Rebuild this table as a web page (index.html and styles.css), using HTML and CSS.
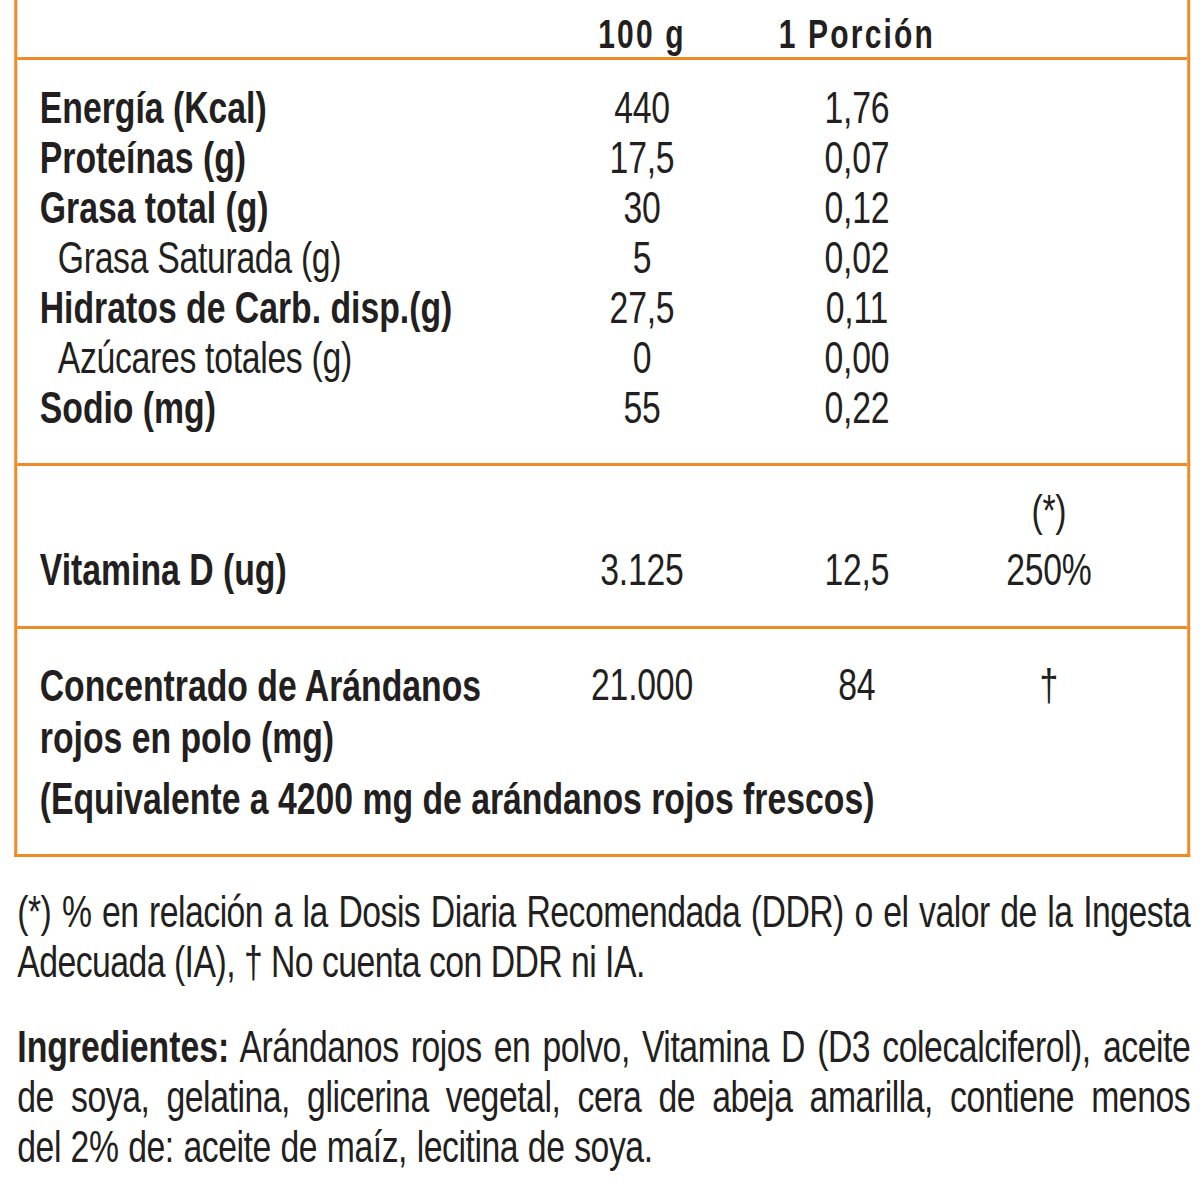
FILE: index.html
```html
<!DOCTYPE html>
<html lang="es">
<head>
<meta charset="utf-8">
<title>Información nutricional</title>
<link rel="stylesheet" href="styles.css">
</head>
<body>
<div class="frame">
<div class="page">
  <div class="panel">
    <div class="grid head">
      <div></div>
      <div class="num">100 g</div>
      <div class="num">1 Porción</div>
      <div></div>
    </div>
    <div class="grid section nutri">
      <div class="label b">Energía (Kcal)</div><div class="num">440</div><div class="num">1,76</div><div></div>
      <div class="label b">Proteínas (g)</div><div class="num">17,5</div><div class="num">0,07</div><div></div>
      <div class="label b">Grasa total (g)</div><div class="num">30</div><div class="num">0,12</div><div></div>
      <div class="label sub">Grasa Saturada (g)</div><div class="num">5</div><div class="num">0,02</div><div></div>
      <div class="label b">Hidratos de Carb. disp.(g)</div><div class="num">27,5</div><div class="num">0,11</div><div></div>
      <div class="label sub">Azúcares totales (g)</div><div class="num">0</div><div class="num">0,00</div><div></div>
      <div class="label b">Sodio (mg)</div><div class="num">55</div><div class="num">0,22</div><div></div>
    </div>
    <div class="grid section vit">
      <div></div><div></div><div></div><div class="num star">(*)</div>
      <div class="label b">Vitamina D (ug)</div><div class="num">3.125</div><div class="num">12,5</div><div class="num">250%</div>
    </div>
    <div class="grid section conc">
      <div class="label b two">Concentrado de Arándanos rojos en polo (mg)</div><div class="num">21.000</div><div class="num">84</div><div class="num">†</div>
      <div class="label b wide">(Equivalente a 4200 mg de arándanos rojos frescos)</div>
    </div>
  </div>
  <p class="note">(*) % en relación a la Dosis Diaria Recomendada (DDR) o el valor de la Ingesta Adecuada (IA), † No cuenta con DDR ni IA.</p>
  <p class="ingr"><strong>Ingredientes:</strong> Arándanos rojos en polvo, Vitamina D (D3 colecalciferol), aceite de soya, gelatina, glicerina vegetal, cera de abeja amarilla, contiene menos del&nbsp;2% de: aceite de maíz, lecitina de soya.</p>
</div>
</div>
</body>
</html>
```
FILE: styles.css
```css
html, body {
  margin: 0;
  padding: 0;
  background: #ffffff;
}
body {
  font-family: "Liberation Sans", Arial, sans-serif;
  color: #231f20;
  font-size: 45px;
  line-height: 50px;
}
.frame {
  width: 1200px;
  overflow: hidden;
}
/* condensed type: the whole label is laid out wide and narrowed once */
.page {
  width: 1600px;
  padding: 0 13px 0 19px;
  box-sizing: border-box;
  transform: scaleX(0.75);
  transform-origin: 0 0;
}
.panel {
  border-left: 4px solid #f08a24;
  border-right: 4px solid #f08a24;
  border-bottom: 3px solid #f08a24;
}
.grid {
  display: grid;
  grid-template-columns: 673px 260px 313px 199px;
  padding-left: 30px;
}
.section {
  border-top: 3px solid #f08a24;
}
.head {
  height: 57px;
  align-items: end;
  font-weight: bold;
  font-size: 40px;
  letter-spacing: 2.9px;
  line-height: 46px;
}
.num {
  text-align: center;
  letter-spacing: -0.3px;
}
.head .num {
  letter-spacing: 2.9px;
}
.b {
  font-weight: bold;
}
.sub {
  padding-left: 24px;
  letter-spacing: -0.4px;
}
.nutri {
  padding-top: 23px;
  padding-bottom: 30px;
}
.vit {
  padding-top: 21px;
  padding-bottom: 31px;
}
.vit .star {
  line-height: 48px;
}
.vit > div:nth-child(n+5) {
  padding-top: 10px;
}
.conc {
  padding-top: 31px;
  padding-bottom: 30px;
}
.two {
  max-width: 627px;
  line-height: 52px;
}
.wide {
  grid-column: 1 / -1;
  padding-top: 10px;
}
.note {
  margin: 30px 0 0 4px;
  text-align: justify;
  letter-spacing: -0.7px;
}
.ingr {
  margin: 35px 0 0 4px;
  text-align: justify;
  letter-spacing: -0.6px;
  word-spacing: 1px;
}
.ingr strong {
  font-weight: bold;
  letter-spacing: 0;
  word-spacing: 0;
}
```
